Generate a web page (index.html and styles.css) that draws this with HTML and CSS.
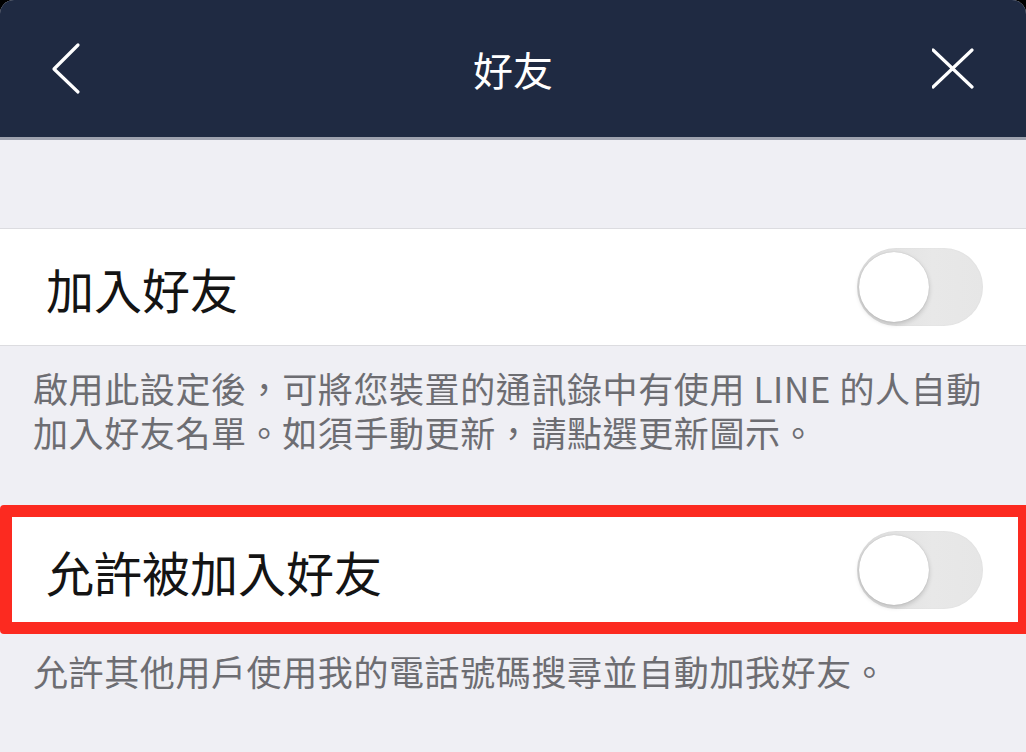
FILE: index.html
```html
<!DOCTYPE html>
<html lang="zh-Hant">
<head>
<meta charset="utf-8">
<title>好友</title>
<link rel="stylesheet" href="styles.css">
</head>
<body>
<div class="screen">
  <header class="nav">
    <svg class="nav-icon back" width="48" height="60" viewBox="0 0 48 60">
      <polyline points="32,6 8,30 32,53" fill="none" stroke="#fff" stroke-width="3.2" stroke-linecap="round" stroke-linejoin="round"/>
    </svg>
    <h1 class="nav-title">好友</h1>
    <svg class="nav-icon close" width="48" height="60" viewBox="0 0 48 60">
      <path d="M1 11 L40 48 M40 11 L1 48" fill="none" stroke="#fff" stroke-width="3.2" stroke-linecap="round"/>
    </svg>
  </header>

  <main class="content">
    <section class="group first">
      <div class="row">
        <span class="row-label">加入好友</span>
        <span class="toggle"><span class="knob"></span></span>
      </div>
      <p class="desc">啟用此設定後，可將您裝置的通訊錄中有使用 LINE 的人自動加入好友名單。如須手動更新，請點選更新圖示。</p>
    </section>

    <section class="group second">
      <div class="row highlighted">
        <span class="row-label">允許被加入好友</span>
        <span class="toggle"><span class="knob"></span></span>
      </div>
      <p class="desc">允許其他用戶使用我的電話號碼搜尋並自動加我好友。</p>
    </section>
  </main>
</div>
</body>
</html>
```

FILE: styles.css
```css
* {
  box-sizing: border-box;
}

html, body {
  margin: 0;
  padding: 0;
  background: #000;
}

.screen {
  width: 1026px;
  height: 752px;
  overflow: hidden;
  background: #efeff4;
  border-radius: 14px 14px 0 0;
  font-family: "Noto Sans CJK TC", "Noto Sans", sans-serif;
}

.nav {
  height: 140px;
  background: #1f2a42;
  border-bottom: 3px solid #9ea2af;
  display: grid;
  grid-template-columns: 1fr auto 1fr;
  align-items: center;
  padding: 0 46px;
}

.nav-icon {
  display: block;
}

.nav-icon.back {
  justify-self: start;
}

.nav-icon.close {
  justify-self: end;
}

.nav-title {
  margin: 0;
  color: #fff;
  font-size: 40px;
  font-weight: 400;
  line-height: 1;
}

.content {
  display: flex;
  flex-direction: column;
}

.group.first {
  margin-top: 88px;
}

.group.second {
  margin-top: 57px;
}

.row {
  position: relative;
  height: 118px;
  background: #fff;
  border-top: 1px solid #dcdce0;
  border-bottom: 1px solid #dcdce0;
  display: flex;
  align-items: center;
  justify-content: space-between;
  padding: 0 43px 0 46px;
}

.row.highlighted {
  border-color: transparent;
}

.row.highlighted::after {
  content: "";
  position: absolute;
  left: 0;
  right: -4px;
  top: -7px;
  bottom: -6px;
  border: 12px solid #fc2a20;
  border-radius: 4px;
}

.row-label {
  font-size: 48px;
  color: #141414;
  line-height: 1;
  padding-top: 2px;
}

.toggle {
  position: relative;
  width: 126px;
  height: 78px;
  border-radius: 39px;
  background: linear-gradient(90deg, #dedede 0%, #e8e8e8 60%, #e6e6e6 100%);
  box-shadow: inset 0 0 2px rgba(0,0,0,0.06);
}

.knob {
  position: absolute;
  left: 2px;
  top: 4px;
  width: 70px;
  height: 70px;
  border-radius: 50%;
  background: #fff;
  box-shadow: 0 2px 5px rgba(0,0,0,0.18), 0 0 1px rgba(0,0,0,0.2);
}

.desc {
  margin: 0;
  padding: 20px 16px 0 33px;
  font-size: 35px;
  line-height: 44px;
  letter-spacing: 0.6px;
  color: #6d6d72;
}
```
